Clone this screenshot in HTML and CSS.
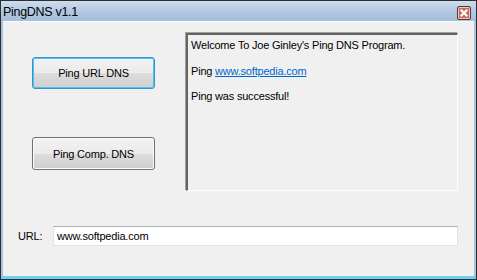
FILE: index.html
```html
<!DOCTYPE html>
<html>
<head>
<meta charset="utf-8">
<link rel="stylesheet" href="styles.css">
</head>
<body>
<div class="window">
  <div class="titlebar">
    <span class="title">PingDNS v1.1</span>
    <span class="close">
      <svg width="14" height="14" viewBox="0 0 14 14">
        <rect x="0.5" y="0.5" width="13" height="13" rx="1.5" fill="#d98a80" stroke="#4a3a3a"/>
        <rect x="1.5" y="1.5" width="11" height="11" rx="1" fill="#c86a5e" stroke="#f2c8c0" stroke-width="1"/>
        <path d="M4.5 4.5 L9.5 9.5 M9.5 4.5 L4.5 9.5" stroke="#fff" stroke-width="2.2" stroke-linecap="square"/>
      </svg>
    </span>
  </div>
  <div class="client">
    <div class="top">
      <div class="buttons">
        <button class="btn default">Ping URL DNS</button>
        <button class="btn">Ping Comp. DNS</button>
      </div>
      <div class="output">
        <p>Welcome To Joe Ginley's Ping DNS Program.</p>
        <p>Ping <a href="#">www.softpedia.com</a></p>
        <p>Ping was successful!</p>
      </div>
    </div>
    <div class="urlrow">
      <label class="label">URL:</label>
      <div class="input">www.softpedia.com</div>
    </div>
  </div>
</div>
</body>
</html>
```
FILE: styles.css
```css
html, body {
  margin: 0;
  padding: 0;
}
body {
  width: 477px;
  height: 280px;
  overflow: hidden;
  font-family: "Liberation Sans", Arial, sans-serif;
}
.window {
  box-sizing: border-box;
  width: 477px;
  height: 280px;
  border: 1px solid #2e2e2e;
  background: #a9c3df;
  padding: 0 2px 3px 2px;
  display: flex;
  flex-direction: column;
  box-shadow: inset 0 -3px 0 0 #6cd0f0;
}
.titlebar {
  height: 20px;
  margin: 0 -2px;
  padding: 0 5px 0 2px;
  background: linear-gradient(#cfdded, #b3c9e2 50%, #a4bedb);
  display: flex;
  align-items: center;
  justify-content: space-between;
}
.title {
  font-size: 12.5px;
  color: #000;
  letter-spacing: -0.3px;
  padding-top: 1px;
}
.close {
  display: flex;
  margin-top: 3px;
}
.client {
  flex: 1;
  background: #f0f0f0;
  border-top: 1px solid #fbfbfb;
  display: flex;
  flex-direction: column;
  font-size: 11px;
  letter-spacing: -0.2px;
  color: #000;
}
.top {
  display: flex;
  margin-top: 11px;
  padding-left: 29px;
}
.buttons {
  width: 123px;
  display: flex;
  flex-direction: column;
  padding-top: 24px;
  gap: 48px;
}
.btn {
  box-sizing: border-box;
  width: 123px;
  height: 33px;
  font-family: "Liberation Sans", Arial, sans-serif;
  font-size: 11px;
  letter-spacing: -0.2px;
  color: #000;
  border: 1px solid #707070;
  border-radius: 3px;
  background: linear-gradient(#f2f2f2, #ebebeb 50%, #dddddd 50%, #cfcfcf);
  padding: 0;
  box-shadow: inset 0 0 0 1px #fcfcfc;
}
.btn.default {
  border-color: #3c8fd0;
  box-shadow: inset 0 0 0 1px #48c8f0;
  height: 32px;
}
.output {
  box-sizing: border-box;
  margin-left: 31px;
  width: 272px;
  height: 158px;
  border-style: solid;
  border-width: 2px 1px 1px 2px;
  border-color: #646464 #ffffff #ffffff #646464;
  box-shadow: -1px -1px 0 0 #a0a0a0;
  padding: 4px 3px;
  line-height: 13px;
}
.output p {
  margin: 0 0 12.5px 0;
}
.output a {
  color: #0066cc;
  text-decoration: underline;
}
.urlrow {
  display: flex;
  align-items: center;
  margin-top: 35px;
  padding-left: 15px;
}
.label {
  width: 35px;
}
.input {
  box-sizing: border-box;
  width: 405px;
  height: 20px;
  background: #fff;
  border: 1px solid #e2e3ea;
  border-top-color: #abadb3;
  padding: 2px 3px;
  line-height: 14px;
}
```
